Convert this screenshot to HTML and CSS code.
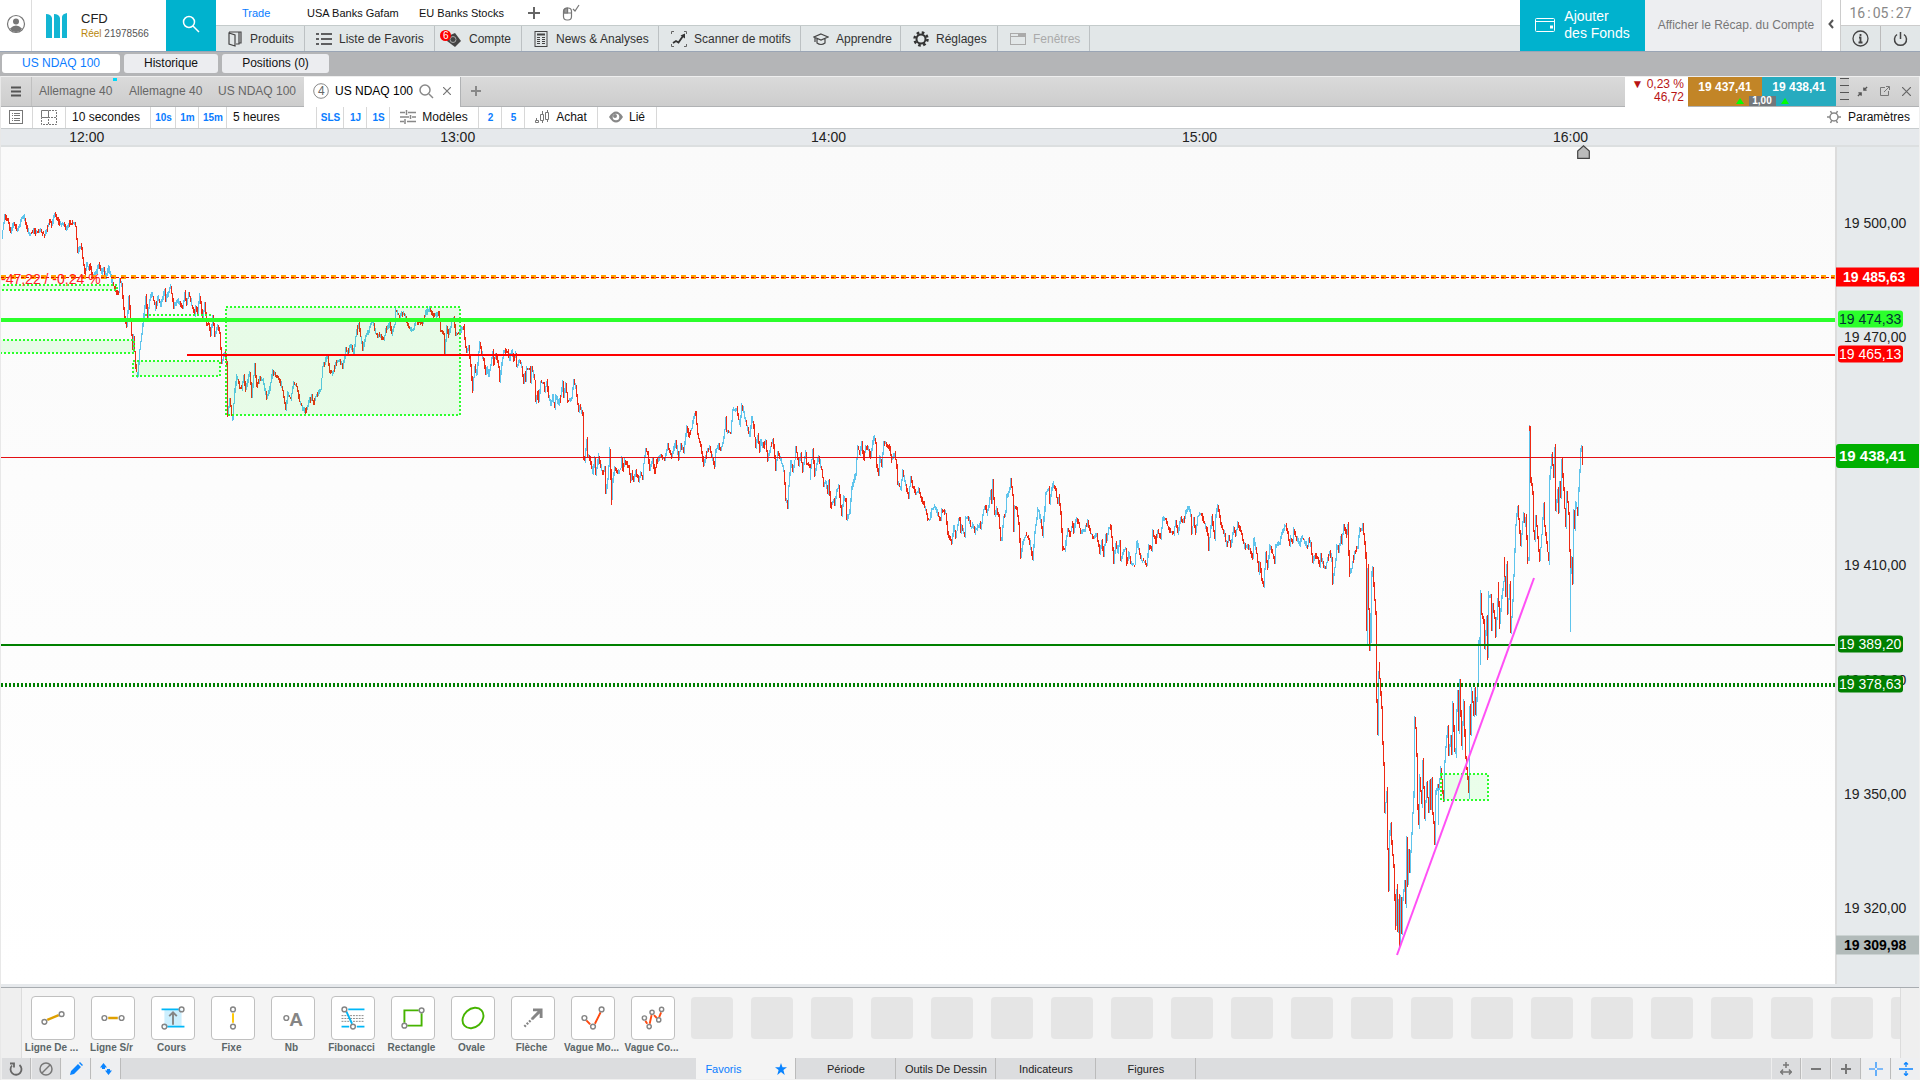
FILE: index.html
```html
<!DOCTYPE html>
<html lang="fr">
<head>
<meta charset="utf-8">
<title>CFD - US NDAQ 100</title>
<link rel="stylesheet" href="styles.css">
</head>
<body>
<header class="header">
  <button class="user" aria-label="Profil"><svg width="20" height="20" viewBox="0 0 20 20"><circle cx="10" cy="10" r="8.500" fill="#fff" stroke="#777" stroke-width="1.200"/><circle cx="10" cy="7.500" r="3" fill="#777"/><path d="M4 14.500q6-6 12 0-2 3.500-6 3.500t-6-3.500z" fill="#777"/></svg></button>
  <div class="account">
    <svg class="brand" width="22" height="26" viewBox="0 0 22 26" fill="#13b5d3"><path d="M0 1q5 0 6 4v20H0zM8 1q5 0 6 4v20H8zM21 0v25h-5V4q0-3 5-4z"/></svg>
    <div class="account-text"><span class="account-name">CFD</span><span class="account-id"><b>Réel</b> 21978566</span></div>
  </div>
  <button class="search" aria-label="Rechercher"><svg width="20" height="20" viewBox="0 0 20 20" fill="none" stroke="#fff" stroke-width="1.500"><circle cx="8" cy="8" r="5.500"/><path d="M12 12l6 6"/></svg></button>
  <div class="nav">
    <nav class="pages">
      <a href="#" class="page w-trade on">Trade</a><a href="#" class="page w-usa">USA Banks Gafam</a><a href="#" class="page w-eu">EU Banks Stocks</a>
      <button class="icon-btn" aria-label="Ajouter une page"><svg width="12" height="12" viewBox="0 0 12 12" stroke="#666" stroke-width="2"><path d="M6 0v12M0 6h12"/></svg></button>
      <button class="icon-btn mouse" aria-label="Souris"><svg width="18" height="18" viewBox="0 0 18 18" fill="none" stroke="#777" stroke-width="1.200"><rect x="1.500" y="4" width="8" height="12" rx="3.500"/><path d="M1.500 9h8M5.500 4v5M11 5l2 2 4-6"/><path d="M2 6q1-2 3.500-2v5H2z" fill="#999"/></svg></button>
    </nav>
    <nav class="menu">
      <button class="m1"><svg width="16" height="18" viewBox="0 0 16 18" fill="none" stroke="#444" stroke-width="1.200"><path d="M2 3l6 2v11l-6-2zM2 2h10v12H9M5 2h9v11h-2"/></svg>Produits</button>
      <button class="m2"><svg width="16" height="14" viewBox="0 0 16 14" stroke="#333" stroke-width="1.500"><path d="M0 2h3M5 2h11M0 7h3M5 7h11M0 12h3M5 12h11"/></svg>Liste de Favoris</button>
      <button class="m3"><svg width="22" height="18" viewBox="0 0 22 18"><path d="M8 6l7-3 6 8-6 6-8-6z" fill="#444"/><circle cx="13" cy="9.500" r="3" fill="none" stroke="#aaa"/><circle cx="5.500" cy="5.500" r="5.500" fill="#f00"/><text x="3" y="9" class="badge">6</text></svg>Compte</button>
      <button class="m4"><svg width="14" height="16" viewBox="0 0 14 16" fill="none" stroke="#444"><rect x="1" y=".5" width="12" height="15"/><path d="M3 3.500h8" stroke-width="2"/><path d="M3 6.500h3M3 8.500h3M3 10.500h3M3 12.500h3M8 6.500h3M8 8.500h3M8 10.500h3M8 12.500h3"/></svg>News &amp; Analyses</button>
      <button class="m5"><svg width="16" height="16" viewBox="0 0 16 16" fill="none" stroke="#333"><path d="M.5 3V.5H3M13 .5h2.500V3M15.500 13v2.500H13M3 15.500H.5V13" stroke="#666"/><path d="M2 12l3-2 2.500 1.500L12 5" stroke-width="1.800"/><path d="M9.500 4.500L14 2.500v5z" fill="#333" stroke="none"/></svg>Scanner de motifs</button>
      <button class="m6"><svg width="16" height="14" viewBox="0 0 16 14" fill="none" stroke="#444" stroke-width="1.200"><path d="M8 2l7 3-7 3-7-3zM4 7v4q4 3 8 0V7M2 6v4"/></svg>Apprendre</button>
      <button class="m7"><svg width="16" height="16" viewBox="0 0 16 16" fill="none" stroke="#333"><circle cx="8" cy="8" r="4.500" stroke-width="2"/><circle cx="8" cy="8" r="6.500" stroke-width="2.500" stroke-dasharray="2.600 2.500"/></svg>Réglages</button>
      <button class="m8" disabled><svg width="16" height="12" viewBox="0 0 16 12" fill="none" stroke="#aaa"><rect x=".5" y=".5" width="15" height="11"/><path d="M1 3.500h14"/><path d="M8 2h7" stroke-width="3"/></svg>Fenêtres</button>
    </nav>
  </div>
  <button class="funds"><svg width="20" height="14" viewBox="0 0 20 14" fill="none" stroke="#fff"><rect x=".5" y=".5" width="19" height="13" rx="1"/><path d="M1 3.500h18"/><path d="M15 9h3" stroke-width="3"/></svg><span>Ajouter<br>des Fonds</span></button>
  <button class="recap">Afficher le Récap. du Compte</button>
  <button class="collapse" aria-label="Réduire"><svg width="6" height="10" viewBox="0 0 6 10" fill="none" stroke="#555" stroke-width="2"><path d="M5 1L1.500 5 5 9"/></svg></button>
  <div class="status">
    <div class="clock"><span>16</span><span>:</span><span>05</span><span>:</span><span>27</span></div>
    <div class="status-btns">
      <button aria-label="Info"><svg width="17" height="17" viewBox="0 0 17 17" fill="none" stroke="#444"><circle cx="8.500" cy="8.500" r="7.500" stroke-width="1.300"/><path d="M8.500 4v2M7 7.500h1.500V12M6.500 12.500h4" stroke-width="1.800"/></svg></button>
      <button aria-label="Quitter"><svg width="15" height="16" viewBox="0 0 15 16" fill="none" stroke="#444" stroke-width="1.500"><path d="M4 3.500a6 6 0 1 0 7 0M7.500 1v7"/></svg></button>
    </div>
  </div>
</header>

<nav class="subtabs">
  <button class="s1 on">US NDAQ 100</button><button class="s2">Historique</button><button class="s3">Positions (0)</button>
</nav>

<main class="panel">
  <div class="tabs">
    <button class="burger" aria-label="Menu"><svg width="10" height="11" viewBox="0 0 10 11" stroke="#555" stroke-width="2"><path d="M0 1.500h10M0 5.500h10M0 9.500h10"/></svg></button>
    <button class="tab">Allemagne 40<i class="flag"></i></button><button class="tab">Allemagne 40</button><button class="tab">US NDAQ 100</button>
    <div class="tab-on">
      <svg width="16" height="16" viewBox="0 0 16 16"><circle cx="8" cy="8" r="7.300" fill="none" stroke="#888"/><text x="5" y="12" class="num">4</text></svg>
      <span>US NDAQ 100</span>
      <svg width="15" height="15" viewBox="0 0 15 15" fill="none" stroke="#888" stroke-width="1.500"><circle cx="6" cy="6" r="5"/><path d="M10 10l4 4"/></svg>
      <button class="close" aria-label="Fermer"><svg width="8" height="8" viewBox="0 0 8 8" stroke="#777" stroke-width="1.200"><path d="M0 0l8 8M8 0L0 8"/></svg></button>
    </div>
    <button class="add" aria-label="Nouvel onglet"><svg width="10" height="10" viewBox="0 0 10 10" stroke="#888" stroke-width="2"><path d="M5 0v10M0 5h10"/></svg></button>
    <div class="change"><span>▼ 0,23 %</span><span>46,72</span></div>
    <div class="quotes">
      <button class="sell">19 437,41</button><button class="buy">19 438,41</button>
      <span class="spread"><i class="up"></i><b>1,00</b><i class="up"></i></span>
    </div>
    <div class="grip"></div>
    <div class="win">
      <button aria-label="Réduire"><svg width="11" height="11" viewBox="0 0 12 12" fill="none" stroke="#555" stroke-width="1.500"><path d="M11 1L7.500 4.500M7.500 1.500v3h3M1 11l3.500-3.500M1.500 7.500h3v3"/></svg></button>
      <button aria-label="Détacher"><svg width="10" height="10" viewBox="0 0 10 10" fill="none" stroke="#777"><path d="M5 1.500H.5v8h8V5M4 6l5-5M6 .5h3.500V4"/></svg></button>
      <button aria-label="Fermer"><svg width="9" height="9" viewBox="0 0 9 9" stroke="#666" stroke-width="1.200"><path d="M0 0l9 9M9 0L0 9"/></svg></button>
    </div>
  </div>

  <div class="toolbar">
    <button class="t-list" aria-label="Liste"><svg width="14" height="14" viewBox="0 0 14 14" fill="none" stroke="#777"><rect x=".5" y=".5" width="13" height="13"/><path d="M3 3.500h1M5 3.500h6M3 5.500h1M5 5.500h6M3 8.500h1M5 8.500h6M3 10.500h1M5 10.500h6"/></svg></button>
    <button class="t-grid" aria-label="Grille"><svg width="16" height="15" viewBox="0 0 16 15" fill="none" stroke="#777"><path d="M.5.5h7v7h-7z"/><path d="M8 .5h7.500v14H.5V8M7.500 14V7.500H15" stroke-dasharray="2 1"/></svg></button>
    <button class="t-int">10 secondes</button>
    <button class="q q25">10s</button><button class="q q23">1m</button><button class="q q28">15m</button>
    <button class="t-range">5 heures</button>
    <button class="q q27">SLS</button><button class="q q23">1J</button><button class="q q23">1S</button>
    <button class="t-mod"><svg width="16" height="14" viewBox="0 0 16 14" stroke="#888" stroke-width="1.500"><path d="M0 2.500h5M8 2.500h8M0 7h9M12 7h4M0 11.500h4M7 11.500h9"/><path d="M6.500 0v5M10.500 5v4M5 9v5"/></svg>Modèles</button>
    <button class="q q23">2</button><button class="q q23">5</button>
    <button class="t-buy"><svg width="15" height="14" viewBox="0 0 15 14" fill="none" stroke="#777"><path d="M1.500 8v3M.5 10.500h3v2h-3zM7.500 1v3M5.500 4.500h3v6h-3zM7.500 11v2M12.500 0v2M10.500 2.500h3v7h-3zM12.500 10v2"/></svg>Achat</button>
    <button class="t-link"><svg width="14" height="12" viewBox="0 0 14 12"><path d="M0 6q7-11 14 0-7 11-14 0z" fill="#888"/><circle cx="7" cy="6" r="3.300" fill="#fff"/><circle cx="6" cy="5" r="2" fill="#888"/></svg>Lié</button>
    <button class="t-set"><svg width="14" height="14" viewBox="0 0 14 14" fill="none" stroke="#888"><circle cx="7" cy="7" r="4" stroke-width="1.500"/><path d="M0 7h3M11 7h3M3.500 1l1.500 3M10.500 1L9 4M3.500 13L5 10M10.500 13L9 10" stroke-width="1.500"/></svg>Paramètres</button>
  </div>

  <div class="times"><span>12:00</span><span>13:00</span><span>14:00</span><span>15:00</span><span>16:00</span></div>

  <div class="plot">
    <svg class="chart" viewBox="1 147 1834 837" preserveAspectRatio="none" role="img" aria-label="Cours US NDAQ 100">
      <g id="candles" shape-rendering="crispEdges" fill="none" stroke-width="1"></g>
      <g class="zones" shape-rendering="crispEdges">
        <rect x="-9" y="285" width="126" height="5"/>
        <rect x="-9" y="340" width="143" height="13"/>
        <rect x="133" y="361" width="87" height="15"/>
        <path d="M145 315h68"/>
        <rect x="226" y="307" width="234" height="108"/>
        <rect x="1441" y="774" width="47" height="26"/>
      </g>
      <g shape-rendering="crispEdges" fill="none">
        <path d="M1 277h1834" stroke="#ffa000" stroke-width="4" stroke-dasharray="5 5"/>
        <path d="M1 277.500h1834" stroke="#e00000" stroke-dasharray="3 2"/>
        <path d="M1 320h1834" stroke="#2bff2b" stroke-width="4"/>
        <path d="M187 355h1648" stroke="#f00" stroke-width="2"/>
        <path d="M1 457.500h1834" stroke="#e30f14"/>
        <path d="M1 645h1834" stroke="#008000" stroke-width="2"/>
        <path d="M1 685h1834" stroke="#008000" stroke-width="4" stroke-dasharray="2 2"/>
      </g>
      <path d="M1397 955L1534 578" stroke="#ff50f5" stroke-width="2"/>
      <text x="1" y="284" class="delta">-47,22 / -0,24 %</text>
    </svg>
    <svg class="marker" width="13" height="14" viewBox="0 0 13 14"><path d="M.7 13.300V6L6.500.8 12.300 6v7.300z" fill="#bbb" stroke="#444" stroke-width="1.200"/></svg>
    <div class="axis">
      <span class="p" style="--y:76">19 500,00</span>
      <span class="p" style="--y:190">19 470,00</span>
      <span class="p" style="--y:418">19 410,00</span>
      <span class="p" style="--y:533">19 380,00</span>
      <span class="p" style="--y:647">19 350,00</span>
      <span class="p" style="--y:761">19 320,00</span>
      <span class="p wide red" style="--y:130">19 485,63</span>
      <span class="p pill lime" style="--y:172">19 474,33</span>
      <span class="p pill red" style="--y:207">19 465,13</span>
      <span class="p wide last" style="--y:309">19 438,41</span>
      <span class="p pill green" style="--y:497">19 389,20</span>
      <span class="p pill green" style="--y:537">19 378,63</span>
      <span class="p wide low" style="--y:798">19 309,98</span>
    </div>
  </div>

  <div class="tray">
    <div class="tools" id="tools">
      <button class="tool"><svg viewBox="0 0 44 44"><path d="M16 24l12-5" stroke="#dfa000" stroke-width="2.500"/><circle cx="13" cy="26" r="2.500"/><circle cx="31" cy="18" r="2.500"/></svg><span>Ligne De ...</span></button>
      <button class="tool"><svg viewBox="0 0 44 44"><path d="M17 22h10" stroke="#dfa000" stroke-width="2.500"/><circle cx="13" cy="22" r="2.500"/><circle cx="31" cy="22" r="2.500"/></svg><span>Ligne S/r</span></button>
      <button class="tool"><svg viewBox="0 0 44 44"><path d="M13 13h18v18H13z" fill="#cceffe" stroke="none"/><path d="M10 13h18M16 31h18" stroke="#00b7f8" stroke-width="2"/><path d="M22 29V16M18 20l4-4 4 4" stroke-width="2"/><circle cx="31" cy="13" r="2.500"/><circle cx="13" cy="31" r="2.500"/></svg><span>Cours</span></button>
      <button class="tool"><svg viewBox="0 0 44 44"><path d="M22 17v10" stroke="#ffc800" stroke-width="2"/><circle cx="22" cy="13" r="2.500"/><circle cx="22" cy="31" r="2.500"/></svg><span>Fixe</span></button>
      <button class="tool"><svg viewBox="0 0 44 44"><circle cx="15" cy="22" r="2.500"/><text x="18" y="30" class="glyph">A</text></svg><span>Nb</span></button>
      <button class="tool"><svg viewBox="0 0 44 44"><path d="M10 19.500h24M10 22.500h24M10 25.500h24" stroke-width="1" stroke-dasharray="2 1"/><path d="M17 13h17M10 31h8M26 31h8M15 15l6 13" stroke="#00b7f8" stroke-width="2"/><circle cx="13" cy="13" r="2.500"/><circle cx="22" cy="31" r="2.500"/></svg><span>Fibonacci</span></button>
      <button class="tool"><svg viewBox="0 0 44 44"><path d="M28 14H13v13M16 30h15V17" stroke="#46b400" stroke-width="2"/><circle cx="31" cy="14" r="2.500"/><circle cx="13" cy="30" r="2.500"/></svg><span>Rectangle</span></button>
      <button class="tool"><svg viewBox="0 0 44 44"><ellipse cx="22" cy="22" rx="12" ry="9.500" transform="rotate(-42 22 22)" stroke="#46b400" stroke-width="2"/></svg><span>Ovale</span></button>
      <button class="tool"><svg viewBox="0 0 44 44"><path d="M13 31l8-8" stroke-width="2.500" stroke-dasharray="2 1.500"/><path d="M21 23l9-9M22 13.500h8.500V22" stroke-width="3"/></svg><span>Flèche</span></button>
      <button class="tool"><svg viewBox="0 0 44 44"><path d="M15 24.500l4 4M24 28l6-12" stroke="#ff4a10" stroke-width="2"/><circle cx="13" cy="22" r="2.500"/><circle cx="22" cy="31" r="2.500"/><circle cx="31" cy="13" r="2.500"/></svg><span>Vague Mo...</span></button>
      <button class="tool"><svg viewBox="0 0 44 44"><path d="M14 25l2 3M18.500 28l2-9M23 19l3 3M28.500 21l2-5" stroke="#ff4a10" stroke-width="2"/><circle cx="13" cy="22" r="2.200"/><circle cx="18" cy="31" r="2.200"/><circle cx="21" cy="16" r="2.200"/><circle cx="28" cy="24" r="2.200"/><circle cx="31" cy="13" r="2.200"/></svg><span>Vague Co...</span></button>
    </div>
  </div>

  <footer class="foot">
    <button class="f" aria-label="Recharger"><svg width="14" height="14" viewBox="0 0 14 14" fill="none" stroke="#666" stroke-width="1.800"><path d="M3 3.500a5.500 5.500 0 1 0 7.500-.5M1 1.500h4v4"/></svg></button>
    <button class="f" aria-label="Désactiver"><svg width="14" height="14" viewBox="0 0 14 14" fill="none" stroke="#777" stroke-width="1.500"><circle cx="7" cy="7" r="6"/><path d="M3 11l8-8"/></svg></button>
    <button class="f on" aria-label="Dessiner"><svg width="14" height="14" viewBox="0 0 14 14" fill="#0a84ff"><path d="M1 13l1-4 7-7 3 3-7 7zM10 1l1-1 3 3-1 1z"/></svg></button>
    <button class="f on" aria-label="Échanger"><svg width="12" height="12" viewBox="0 0 12 12" fill="#0a84ff"><path d="M0 4.500L3.500 0 7 4.500zM5 7.500L8.500 12 12 7.500z"/><path d="M2 4h3v2H2zM7 6h3v2H7z"/></svg></button>
    <div class="foot-tabs">
      <button class="ft on">Favoris<svg width="12" height="12" viewBox="0 0 12 12" fill="#0a84ff"><path d="M6 0l1.500 4.300H12L8.400 7l1.300 5L6 9l-3.700 3 1.300-5L0 4.300h4.500z"/></svg></button>
      <button class="ft">Période</button><button class="ft">Outils De Dessin</button><button class="ft">Indicateurs</button><button class="ft">Figures</button>
    </div>
    <button class="f" aria-label="Étendre"><svg width="12" height="13" viewBox="0 0 12 13" fill="none" stroke="#777" stroke-width="1.500"><path d="M6 0v6M3 3h6M0 10h12M3 7.500L.8 10 3 12.500M9 7.500l2.200 2.500L9 12.500"/></svg></button>
    <button class="f" aria-label="Zoom arrière"><svg width="10" height="10" viewBox="0 0 10 10" stroke="#777" stroke-width="2"><path d="M0 5h10"/></svg></button>
    <button class="f" aria-label="Zoom avant"><svg width="10" height="10" viewBox="0 0 10 10" stroke="#777" stroke-width="2"><path d="M0 5h10M5 0v10"/></svg></button>
    <button class="f on" aria-label="Réticule"><svg width="14" height="14" viewBox="0 0 14 14" stroke="#0a84ff" stroke-width="1.200"><path d="M0 7h6M8 7h6M7 0v6M7 8v6"/></svg></button>
    <button class="f on end" aria-label="Ajuster"><svg width="14" height="14" viewBox="0 0 14 14" fill="none" stroke="#0a84ff" stroke-width="1.300"><path d="M0 7h14M7 0v5M7 9v5M5 2.500L7 .5l2 2M5 11.500l2 2 2-2"/></svg></button>
  </footer>
</main>
<script src="chart.js"></script>
</body>
</html>
```

FILE: chart.js
```js
// Turning points of the price curve. Each block has its own origin and scale.
const blocks = [
  { ox: 0, oy: 190, sy: 3, pts: "7,140 16,78 24,90 33,125 43,98 54,122 66,82 73,80 88,130 100,128 104,115 108,130 120,122 135,135 150,95 157,105 166,70 172,86 185,105 193,100 203,118 210,98 222,98 228,110 236,188 243,168 248,180 256,250 262,220 268,235 272,225 280,262 292,245 299,222 307,250 312,235 320,262 328,232 338,270 350,305 358,310 362,265 368,285 376,385 381,405 389,322 395,385 400,480 404,440 408,530 415,560 420,480 427,430 435,350 440,320 445,380 450,330 458,308 468,355 476,325 485,345 495,300 500,330 508,305 515,290 523,350 535,330 550,355 557,308 563,345 569,308 576,345 585,372 590,350 594,368 602,318 610,385 617,342 622,400 627,400 633,435 640,380 647,435 655,405 661,430 667,520 672,495 677,490 681,520 686,670 690,625 697,675 701,685 705,600 713,560 720,590 727,595 733,560 740,600 750,548 757,620 767,525 773,590 780,565 790,570 802,622 810,595 821,545 832,560 843,580 850,600 860,660 866,610 873,625 882,578 892,590 900,635 910,655 919,665 927,635 937,620 943,640 950,620 963,600 970,530 978,510 985,500 992,545 1000,550 1010,520 1020,508 1030,535 1038,480 1045,490 1053,462 1062,488 1070,440 1077,400 1083,440 1090,475 1098,440 1107,420 1120,390 1130,430 1145,440 1152,450 1160,420 1170,402 1178,430 1185,405 1190,360 1200,380 1207,370 1217,375 1225,405 1235,420 1242,415 1250,395 1260,400 1270,400 1280,370 1290,355 1300,375 1310,375 1317,370 1325,420 1332,435 1336,490 1343,410 1349,435 1357,395 1363,385 1370,430 1377,430" },
  { ox: 460, oy: 300, sy: 3, pts: "0,95 5,90 12,80 17,120 23,160 29,140 35,200 41,270 46,200 51,222 60,128 66,160 73,180 78,225 82,205 87,227 95,195 100,155 104,190 110,165 117,200 122,240 127,195 133,150 145,155 151,180 157,152 162,180 168,160 173,200 180,180 187,200 192,250 197,220 200,240 203,205 210,205 213,245 216,200 222,228 226,240 230,305 234,280 238,300 245,248 252,250 256,275 263,245 268,290 275,315 280,290 286,325 290,290 297,312 305,290 309,250 314,290 318,255 325,300 333,300 338,290 344,245 350,260 357,335 362,320 369,340 374,470 377,480 381,420 386,465 392,475 400,520 405,475 410,520 417,468 425,500 430,520 435,505 440,575 444,540 451,450 456,598 461,540 467,505 475,520 485,505 487,475 491,510 497,480 507,500 513,540 517,520 522,540 530,510 538,545 545,520 550,535 553,490 560,450 566,460 570,510 580,480 587,520 593,485 605,465 615,480 625,435 638,470 650,425 657,475 665,435 673,455 681,380 688,405 697,385 702,350 710,342 716,400 725,440 733,495 743,455 750,440 757,470 765,500 768,450 777,435 783,450 790,430 796,390 800,350 803,395 813,398 820,330 832,325 840,375 848,315 853,335 860,365 866,390 872,410 878,355 884,380 890,440 895,405 902,450 905,425 912,440 920,422 926,480 933,440 940,420 944,440 948,505 955,460 963,480 973,510 978,595 984,625 988,560 994,485 999,512 1005,480 1010,440 1019,495 1024,465 1030,510 1038,455 1043,490 1050,500 1052,535 1060,450 1067,525 1073,490 1079,472 1086,510 1093,555 1100,545 1104,578 1108,540 1115,620 1122,600 1127,618 1133,570 1138,560 1146,645 1152,590 1158,600 1163,658 1170,635 1178,565 1188,520 1195,440 1202,460 1207,430 1213,475 1218,440 1225,445 1233,470 1242,410 1249,430 1253,500 1257,520 1262,470 1267,495 1273,430 1280,430 1290,445 1297,480 1305,460 1312,500 1316,550 1323,568 1330,515 1337,545 1347,590 1354,530 1360,560 1368,580 1377,570 1385,590 1395,620 1405,655 1412,660 1417,630 1427,620 1432,635 1444,660 1448,628 1458,640 1465,700 1477,728 1483,680 1490,710 1498,660" },
  { ox: 940, oy: 400, sy: 3, pts: "60,360 63,395 68,380 75,405 80,355 88,355 93,380 100,375 106,395 113,385 120,370 124,385 133,330 138,315 143,340 148,320 154,275 158,310 161,245 165,345 172,325 178,350 183,418 187,415 192,350 198,335 203,290 210,270 215,240 219,285 222,390 227,325 232,325 238,370 244,470 250,425 258,405 267,415 274,440 281,480 287,400 294,330 298,330 304,365 311,405 320,280 327,265 332,305 339,250 348,270 354,310 358,290 364,340 370,445 377,450 385,385 392,405 400,370 403,395 409,360 417,370 425,400 437,390 445,365 455,400 463,415 472,400 481,460 486,425 493,465 498,405 503,420 508,385 515,378 522,485 530,430 535,455 541,425 545,480 552,450 558,448 563,490 568,460 575,490 586,495 593,425 600,460 607,480 615,485 622,497 629,440 637,450 641,395 650,425 655,390 664,415 670,350 680,360 688,385 695,395 702,400 708,362 716,400 725,355 733,365 740,335 747,318 753,350 758,400 762,355 770,400 775,350 785,340 795,370 805,400 809,445 817,350 825,415 830,345 836,318 845,370 855,405 862,440 868,410 873,438 883,385 890,405 896,370 905,390 912,430 918,445 925,440 935,455 940,475 944,415 952,460 957,515 962,490 968,535 974,555 978,460 984,505 990,440 998,450 1005,485 1010,440 1020,425 1030,395 1040,375 1045,400 1050,435 1055,415 1060,425 1064,388 1070,410 1082,435 1087,408 1095,425 1104,440 1109,415 1115,435 1120,485 1130,460 1140,495 1145,465 1152,500 1160,500 1165,475 1172,455 1178,480 1181,550 1188,480 1192,435 1198,455 1203,410 1208,425 1213,380 1222,405 1226,380 1232,520 1238,505 1245,455 1255,440 1262,385" },
  { ox: 1340, oy: 400, sy: 2.8, pts: "67,365 70,350 75,400 80,440 81,640 83,680 86,470 90,700 93,600 95,670 98,490 101,470 105,560 108,600 109,760 114,925 117,760 119,740 123,820 127,860 130,960 134,1020 137,1155 142,1100 146,1260 149,1370 152,1215 154,1190 158,1240 163,1310 168,1470 171,1370 174,1490 179,1400 182,1520 185,1395 187,1495 191,1400 197,1345 199,1410 203,1230 206,1350 209,1260 212,1320 218,1210 223,1100 226,895 229,920 232,1000 236,1140 239,1190 241,1060 247,1130 250,1010 254,1085 257,1170 263,1075 267,1150 270,1070 274,1140 277,1060 280,1160 284,1185 287,1240 290,1100 294,1080 296,1190 299,1090 304,1030 309,1100 313,1125 315,1010 320,970 325,915 329,995 333,940 336,990 340,850 345,980 350,985 352,870 356,815 359,920 362,795 368,970 373,855 378,1000 384,1060 386,1095 389,1100 392,860 395,930 398,815 403,880 406,810 410,880 414,800 416,690 420,665 422,730 424,545 428,600 433,620 437,695 443,610 446,720 449,550 455,545 457,640 460,570 465,610 470,660 474,560 476,510 482,625 486,550 492,510 494,445 500,545 502,460 506,600 510,520 515,650 520,560 525,420 530,350 535,300 540,370 545,405 550,340 554,320 558,350 560,320 566,445 568,450 569,75 572,85 575,220 580,260 582,365 585,390 590,325 597,420 602,450 607,375 612,290 617,350 622,400 628,450 632,220 638,150 643,215 647,135 650,310 655,250 657,310 660,230 665,270 668,170 674,250 678,355 683,255 687,320 690,420 692,635 695,480 697,440 700,510 703,310 707,360 710,290 714,320 718,250 722,200 725,140 728,135 729,175" }
];

const points = blocks.flatMap(b => b.pts.split(" ").map(p => {
  const [x, y] = p.split(",").map(Number);
  return [b.ox + x / 3, b.oy + y / b.sy];
}));

let seed = 7;
const rand = () => (seed = (seed * 16807) % 2147483647) / 2147483647;

// One pixel column per candle: blue when the price rises, red when it falls.
const bars = [];
for (let i = 1; i < points.length; i++) {
  const [x0, y0] = points[i - 1];
  const [x1, y1] = points[i];
  const from = Math.floor(x0);
  const steps = Math.max(1, Math.floor(x1) - from);
  for (let s = 0; s < steps; s++) {
    const a = y0 + (y1 - y0) * s / steps;
    const b = y0 + (y1 - y0) * (s + 1) / steps;
    const wick = Math.abs(y1 - y0) > 40 ? 6 : 3;
    let up = y1 < y0;
    if (Math.abs(b - a) < 6 && rand() < (up ? 0.15 : 0.3)) up = !up;
    const top = Math.round(Math.min(a, b) - rand() * wick);
    const bottom = Math.round(Math.max(a, b) + rand() * wick);
    bars.push(`<path d="M${from + s + 0.5} ${top}V${Math.max(bottom, top + 2)}" stroke="${up ? "#5fc4ec" : "#ee2a14"}"/>`);
  }
}
document.getElementById("candles").innerHTML = bars.join("");

// Empty favourite slots after the drawing tools.
const tools = document.getElementById("tools");
for (let i = 0; i < 21; i++) {
  const slot = document.createElement("div");
  slot.className = "slot";
  tools.append(slot);
}
```

FILE: styles.css
```css
* { box-sizing: border-box; }
body {
  margin: 0; min-height: 100vh; display: flex; flex-direction: column;
  font: 12px/16px "Liberation Sans", Arial, sans-serif; color: #222; background: #f4f4f4;
}
button { font: inherit; color: inherit; border: 0; padding: 0; margin: 0; background: none; display: flex; align-items: center; justify-content: center; white-space: nowrap; flex-shrink: 0; }
svg { flex-shrink: 0; }
a { color: inherit; text-decoration: none; }

.header { display: flex; height: 52px; background: #fff; border-bottom: 1px solid #9aa5b5; }
.user { width: 32px; border-right: 1px solid #ddd; padding-bottom: 4px; }
.account { display: flex; width: 134px; padding-left: 14px; gap: 13px; align-items: center; }
.account-text { display: flex; flex-direction: column; }
.account-name { font-size: 13px; }
.account-id { font-size: 10px; color: #555; line-height: 14px; }
.account-id b { font-weight: normal; color: #b8860b; }
.search { width: 50px; background: #00b2ce; padding-bottom: 4px; }
.nav { flex: 1; min-width: 0; display: flex; flex-direction: column; }
.pages { display: flex; height: 25px; align-items: center; font-size: 11px; color: #111; padding-left: 26px; }
.page.on { color: #0a7cff; }
.w-trade { width: 65px; }
.w-usa { width: 112px; }
.w-eu { width: 109px; }
.mouse { margin-left: 22px; }
.menu { flex: 1; display: flex; background: #e2e7e8; border-top: 1px solid #c4cbcb; }
.menu button { justify-content: flex-start; border-right: 1px solid #bcc1c3; gap: 7px; padding-left: 11px; color: #333; }
.menu button:disabled { color: #aaa; }
.menu .m1 { width: 89px; }
.menu .m2 { width: 130px; }
.menu .m3 { width: 87px; padding-left: 5px; }
.menu .m4 { width: 137px; gap: 8px; padding-left: 12px; }
.menu .m5 { width: 142px; padding-left: 12px; }
.menu .m6 { width: 100px; padding-left: 12px; }
.menu .m7 { width: 97px; padding-left: 12px; }
.menu .m8 { width: 92px; padding-left: 12px; }
.badge { font-size: 10px; fill: #fff; }
.funds { width: 125px; background: #00b2ce; color: #fff; font-size: 14px; line-height: 17px; text-align: left; gap: 9px; padding-bottom: 2px; }
.recap { width: 177px; background: #edeef1; border-right: 1px solid #ddd; color: #777; padding: 0 0 2px 6px; }
.collapse { width: 18px; padding-bottom: 4px; }
.status { width: 80px; display: flex; flex-direction: column; border-left: 1px solid #ccc; }
.clock { height: 26px; display: flex; gap: 2px; align-items: center; justify-content: center; font: 14px/16px Roboto, sans-serif; color: #888; border-bottom: 1px solid #ccc; }
.status-btns { flex: 1; display: flex; background: #e2e7e8; }
.status-btns button { flex: 1; }
.status-btns button + button { border-left: 1px solid #bbb; }

.subtabs { display: flex; gap: 4px; height: 24px; padding: 2px 2px 3px; background: #b4b5b7; }
.subtabs button { background: #ecedf0; border-radius: 3px; color: #111; padding-bottom: 1px; }
.subtabs .on { background: #fff; color: #0a7cff; }
.s1 { width: 118px; }
.s2 { width: 94px; }
.s3 { width: 107px; }

.panel { flex: 1; display: flex; flex-direction: column; border-left: 1px solid #e8e8e8; border-right: 1px solid #f0f0f0; }
.tabs { display: flex; height: 31px; background: linear-gradient(#dadada, #cdcdcd); border-top: 1px solid #eee; border-bottom: 1px solid #b0b2b4; }
.burger { width: 31px; border-right: 1px solid #c0c0c0; margin-right: 7px; padding-right: 1px; }
.tab { position: relative; width: 90px; justify-content: flex-start; color: #666; padding-bottom: 1px; }
.tab + .tab { width: 89px; }
.tab + .tab + .tab { width: 86px; }
.flag { position: absolute; left: 74px; top: 1px; width: 4px; height: 3px; background: #00d8f8; }
.tab-on { display: flex; align-items: center; gap: 6px; width: 157px; margin-bottom: -1px; padding: 0 0 2px 9px; background: #fff; border-right: 1px solid #b0b2b4; color: #000; }
.close { margin-left: 3px; }
.add { width: 30px; margin-right: auto; padding-bottom: 1px; }
.change { width: 63px; background: #fff; color: #b81414; display: flex; flex-direction: column; align-items: flex-end; justify-content: center; line-height: 13px; padding: 0 4px 2px 0; margin-bottom: -1px; }
.quotes { display: flex; position: relative; color: #fff; font-weight: bold; }
.quotes button { width: 74px; padding-bottom: 10px; }
.sell { background: #c28527; }
.buy { background: #27abbf; }
.spread { position: absolute; left: 0; right: 0; bottom: 0; display: flex; gap: 5px; align-items: center; justify-content: center; font-size: 10px; }
.spread b { background: #72777b; height: 10px; width: 27px; line-height: 10px; text-align: center; }
.up { border: 4px solid transparent; border-top: 0; border-bottom: 6px solid #0f0; }
.grip { width: 9px; margin: 1px 0 0 4px; height: 28px; background: repeating-linear-gradient(#555 0 1px, #ccc 1px 7px); }
.win { width: 70px; display: flex; justify-content: flex-end; gap: 12px; padding: 0 8px 1px 0; }

.toolbar { display: flex; height: 22px; background: #fff; border-bottom: 1px solid #c8ccce; color: #111; }
.toolbar button { border-right: 1px solid #d8d8d8; padding-bottom: 1px; }
.toolbar .t-list { width: 32px; padding-right: 1px; }
.t-grid { width: 33px; }
.toolbar .t-int { width: 85px; padding-right: 4px; }
.q { font-size: 10px; font-weight: bold; color: #0a7cff; }
.toolbar .q { padding: 1px 0 0 1px; }
.q25 { width: 25px; }
.q23 { width: 23px; }
.q28 { width: 28px; }
.q27 { width: 27px; }
.toolbar .t-range { width: 90px; justify-content: flex-start; padding-left: 6px; }
.t-mod, .t-buy, .t-link { gap: 6px; }
.t-mod { width: 89px; }
.t-buy { width: 73px; }
.t-link { width: 59px; }
.toolbar .t-set { margin-left: auto; gap: 7px; padding-right: 9px; border: 0; }

.times { display: flex; height: 18px; background: #e6e9ec; border-bottom: 2px solid #dcdfe0; overflow: hidden; font-size: 14px; line-height: 16px; text-align: center; }
.times span { flex: 0 0 19.34%; }
.times span:first-child { margin-left: -5.2%; }

.plot { flex: 1; min-height: 400px; display: flex; position: relative; background: linear-gradient(#fafafa, #fff); border-bottom: 3px solid #e6e9ec; }
.chart { flex: 1; min-width: 0; height: auto; display: block; }
.zones { fill: rgba(0, 255, 0, .08); stroke: #2bff2b; stroke-width: 2; stroke-dasharray: 2 2; }
.delta { font-size: 14px; fill: #f22; }
.marker { position: absolute; left: 82.15%; top: -2px; }
.axis { position: relative; width: 84px; background: #e6eaec; border-left: 2px solid #dcdcdc; }
.p { position: absolute; left: 7px; top: calc(var(--y) / 837 * 100%); transform: translateY(-50%); font-size: 14px; line-height: 17px; white-space: nowrap; }
.wide { left: -1px; right: 0; padding-left: 7px; font-weight: bold; line-height: 19px; color: #fff; }
.pill { left: 1px; width: 65px; padding-left: 1px; border-radius: 3px; color: #fff; }
.red { background: #f00; }
.lime { background: #2bff2b; color: #033; }
.green { background: #008000; }
.last { background: #00b000; font-size: 15px; line-height: 24px; padding-left: 3px; border-radius: 3px 0 0 3px; }
.low { background: #b2bbba; color: #000; padding-left: 8px; }

.tray { display: flex; height: 71px; background: #efefef; border-top: 1px solid #a8acb0; padding: 0 18px 0 20px; }
.tools { flex: 1; min-width: 0; display: flex; overflow: hidden; background: #f4f4f4; border: solid #dcdcdc; border-width: 0 1px; padding: 8px 0 0 1px; }
.tool { width: 60px; flex-direction: column; justify-content: flex-start; gap: 0; font-size: 10px; font-weight: bold; color: #5b6668; }
.tool svg { width: 44px; height: 44px; background: #fff; border: 1px solid #c0c0c0; border-radius: 4px; fill: none; stroke: #858585; stroke-width: 1.500; }
.tool span { margin-right: 3px; }
.tool .glyph { font-size: 20px; fill: #858585; stroke: none; }
.slot { flex: 0 0 42px; height: 42px; margin: 1px 10px 1px 8px; background: #e5e5e5; border-radius: 4px; }

.foot { display: flex; height: 22px; background: #dcdddf; border-bottom: 1px solid #f0f0f0; font-size: 11px; }
.f { width: 30px; border-right: 1px solid #bbb; border-left: 1px solid #eee; }
.f.on { background: #eeeff1; }
.f.end { width: 28px; border-right: 0; }
.foot-tabs { flex: 1; display: flex; padding-left: 30%; }
.ft { width: 100px; border-right: 1px solid #bbb; }
.ft.on { background: #f4f4f4; color: #0a7cff; justify-content: space-between; padding: 0 8px 0 9px; }
.num { font-size: 12px; fill: #666; }
```
